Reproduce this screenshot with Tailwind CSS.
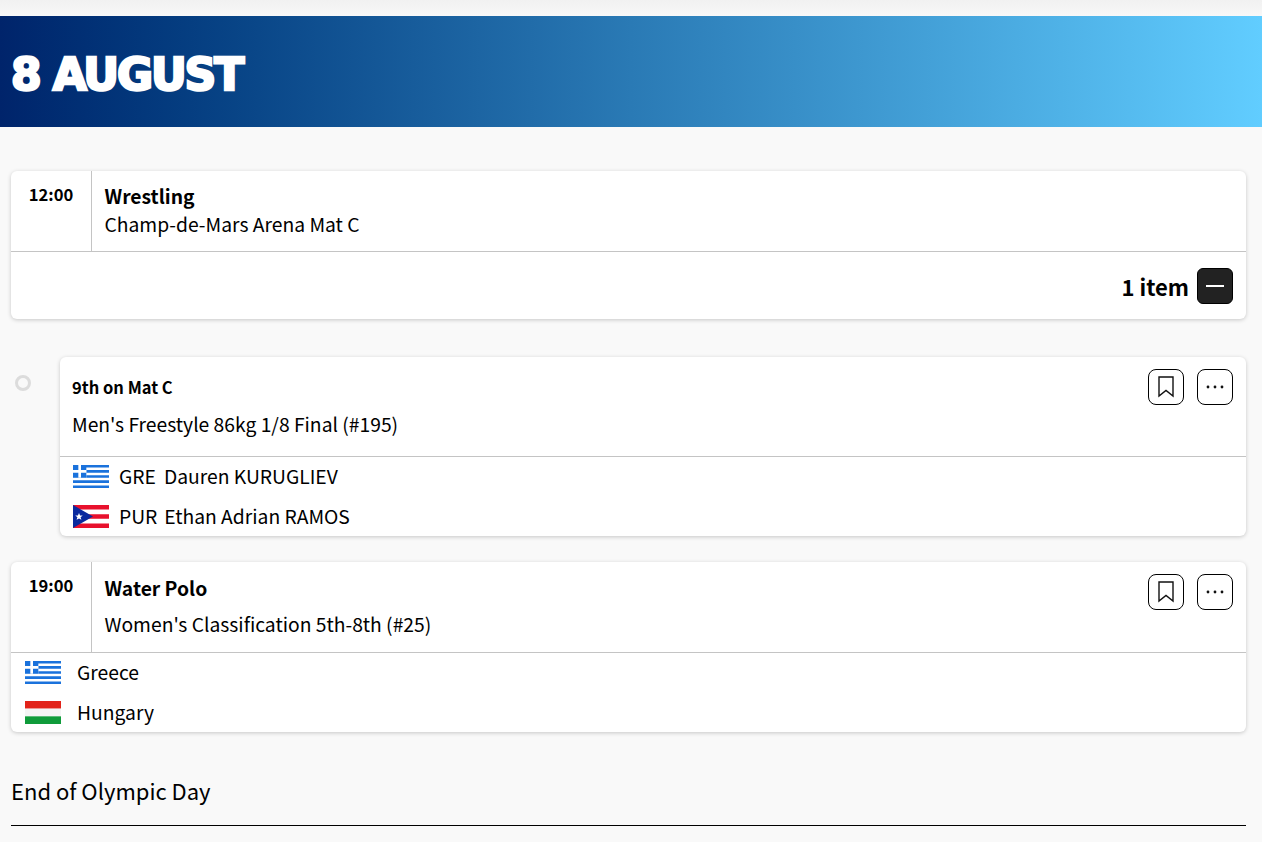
<!DOCTYPE html>
<html lang="en">
<head>
    <meta charset="UTF-8">
    <meta name="viewport" content="width=device-width, initial-scale=1.0">
    <title>8 August</title>
    <script src="https://cdn.jsdelivr.net/npm/@tailwindcss/browser@4"></script>
</head>
<body class="bg-[#f9f9f9] text-black font-['Noto_Sans_CJK_JP','Liberation_Sans',sans-serif] h-[842px] overflow-hidden">
    <div class="h-4 bg-gradient-to-b from-[#f1f1f1] to-[#f8f8f8]"></div>
    <header class="h-[111px] flex items-center pl-[11px] pt-[6px] bg-gradient-to-r from-[#00246b] via-[#2a7ab5] via-50% to-[#61cdff]">
        <h1 class="text-[44px] leading-none font-bold text-white font-['DejaVu_Sans',sans-serif] tracking-[-2.1px] [-webkit-text-stroke:2.5px_white]">8 AUGUST</h1>
    </header>

    <main class="pl-[11px] pr-4 pt-11">
        <!-- wrestling -->
        <section class="bg-white rounded-md shadow-[0_1px_4px_rgba(0,0,0,0.2)] h-[148px]">
            <div class="flex h-[81px] border-b border-[#c4c4c4]">
                <div class="w-[81px] shrink-0 border-r border-[#c4c4c4] text-center pt-[13px] text-[16.600px] leading-[20px] font-bold">12:00</div>
                <div class="pl-[12.500px] pt-3">
                    <div class="text-[19.300px] leading-[26px] font-bold">Wrestling</div>
                    <div class="text-[19.300px] leading-[28px] mt-px">Champ-de-Mars Arena Mat C</div>
                </div>
            </div>
            <div class="flex items-center justify-end gap-2 h-[67px] pr-[13px]">
                <span class="text-[22px] leading-none font-bold">1 item</span>
                <button class="w-9 h-9 rounded-md bg-[#222] border border-black flex items-center justify-center">
                    <span class="block w-[18px] h-[2px] bg-white"></span>
                </button>
            </div>
        </section>

        <!-- match -->
        <div class="relative pl-[49px] mt-[38px]">
            <span class="absolute left-1 top-[18px] w-4 h-4 rounded-full border-[3px] border-[#dcdcdc]"></span>
            <section class="bg-white rounded-md shadow-[0_1px_4px_rgba(0,0,0,0.2)] h-[179px]">
                <div class="relative h-[100px] border-b border-[#c4c4c4] pl-3 pt-[18px]">
                    <div class="text-[16.500px] leading-[24px] font-bold">9th on Mat C</div>
                    <div class="text-[19.300px] leading-[28px] mt-[11px]">Men's Freestyle 86kg 1/8 Final (#195)</div>
                    <div class="absolute right-[13px] top-3 flex gap-[13px]">
                        <button class="w-9 h-9 rounded-lg border border-black flex items-center justify-center">
                            <svg width="16" height="22" viewBox="0 0 16 22" fill="none" stroke="#111" stroke-width="1.400"><path d="M1 1h14v19l-7-5.500L1 20z"/></svg>
                        </button>
                        <button class="w-9 h-9 rounded-lg border border-black flex items-center justify-center">
                            <svg width="20" height="4" viewBox="0 0 20 4" fill="#111"><circle cx="3" cy="2" r="1.400"/><circle cx="10" cy="2" r="1.400"/><circle cx="17" cy="2" r="1.400"/></svg>
                        </button>
                    </div>
                </div>
                <div class="flex items-center pl-[13px] pb-[2px] h-10 text-[19.300px] leading-[28px]">
                    <svg class="w-[36px] h-[23px] shrink-0" viewBox="0 0 27 18" preserveAspectRatio="none"><rect width="27" height="18" fill="#fff"/><path d="M0 1h27M10 5h17M10 9h17M0 13h27M0 17h27" stroke="#1a72dc" stroke-width="2"/><rect width="10" height="10" fill="#1a72dc"/><path d="M5 0v10M0 5h10" stroke="#fff" stroke-width="2"/></svg>
                    <span class="ml-[10px]">GRE</span><span class="ml-2">Dauren KURUGLIEV</span>
                </div>
                <div class="flex items-center pl-[13px] pb-[2px] h-10 text-[19.300px] leading-[28px]">
                    <svg class="w-[36px] h-[23px] shrink-0" viewBox="0 0 27 18" preserveAspectRatio="none"><rect width="27" height="18" fill="#fff"/><path d="M0 1.800h27M0 9h27M0 16.200h27" stroke="#e8112d" stroke-width="3.600"/><path d="M0 0l15 9-15 9z" fill="#0a2a9e"/><path d="M4.500 6.300l.8 1.900 2 .1-1.600 1.300.6 2-1.800-1.100-1.800 1.100.6-2-1.600-1.300 2-.1z" fill="#fff"/></svg>
                    <span class="ml-[10px]">PUR</span><span class="ml-[7px]">Ethan Adrian RAMOS</span>
                </div>
            </section>
        </div>

        <!-- water polo -->
        <section class="bg-white rounded-md shadow-[0_1px_4px_rgba(0,0,0,0.2)] h-[170px] mt-[26px]">
            <div class="relative flex h-[91px] border-b border-[#c4c4c4]">
                <div class="w-[81px] shrink-0 border-r border-[#c4c4c4] text-center pt-[13px] text-[16.600px] leading-[20px] font-bold">19:00</div>
                <div class="pl-[12.500px] pt-[13px]">
                    <div class="text-[19.300px] leading-[26px] font-bold">Water Polo</div>
                    <div class="text-[19.300px] leading-[28px] mt-[9px]">Women's Classification 5th-8th (#25)</div>
                </div>
                <div class="absolute right-[13px] top-3 flex gap-[13px]">
                    <button class="w-9 h-9 rounded-lg border border-black flex items-center justify-center">
                        <svg width="16" height="22" viewBox="0 0 16 22" fill="none" stroke="#111" stroke-width="1.400"><path d="M1 1h14v19l-7-5.500L1 20z"/></svg>
                    </button>
                    <button class="w-9 h-9 rounded-lg border border-black flex items-center justify-center">
                        <svg width="20" height="4" viewBox="0 0 20 4" fill="#111"><circle cx="3" cy="2" r="1.400"/><circle cx="10" cy="2" r="1.400"/><circle cx="17" cy="2" r="1.400"/></svg>
                    </button>
                </div>
            </div>
            <div class="flex items-center pl-[14px] pb-[2px] h-10 text-[19.300px] leading-[28px]">
                <svg class="w-[36px] h-[23px] shrink-0" viewBox="0 0 27 18" preserveAspectRatio="none"><rect width="27" height="18" fill="#fff"/><path d="M0 1h27M10 5h17M10 9h17M0 13h27M0 17h27" stroke="#1a72dc" stroke-width="2"/><rect width="10" height="10" fill="#1a72dc"/><path d="M5 0v10M0 5h10" stroke="#fff" stroke-width="2"/></svg>
                <span class="ml-[16px]">Greece</span>
            </div>
            <div class="flex items-center pl-[14px] pb-[2px] h-10 text-[19.300px] leading-[28px]">
                <svg class="w-[36px] h-[23px] shrink-0" viewBox="0 0 27 18" preserveAspectRatio="none"><rect width="27" height="6" fill="#e2231a"/><rect y="6" width="27" height="6" fill="#f4f4f4"/><rect y="12" width="27" height="6" fill="#0f9b3a"/></svg>
                <span class="ml-[16px]">Hungary</span>
            </div>
        </section>

        <div class="mt-[41px] pb-[18px] border-b border-black text-[22px] leading-[34px]">End of Olympic Day</div>
    </main>
</body>
</html>
